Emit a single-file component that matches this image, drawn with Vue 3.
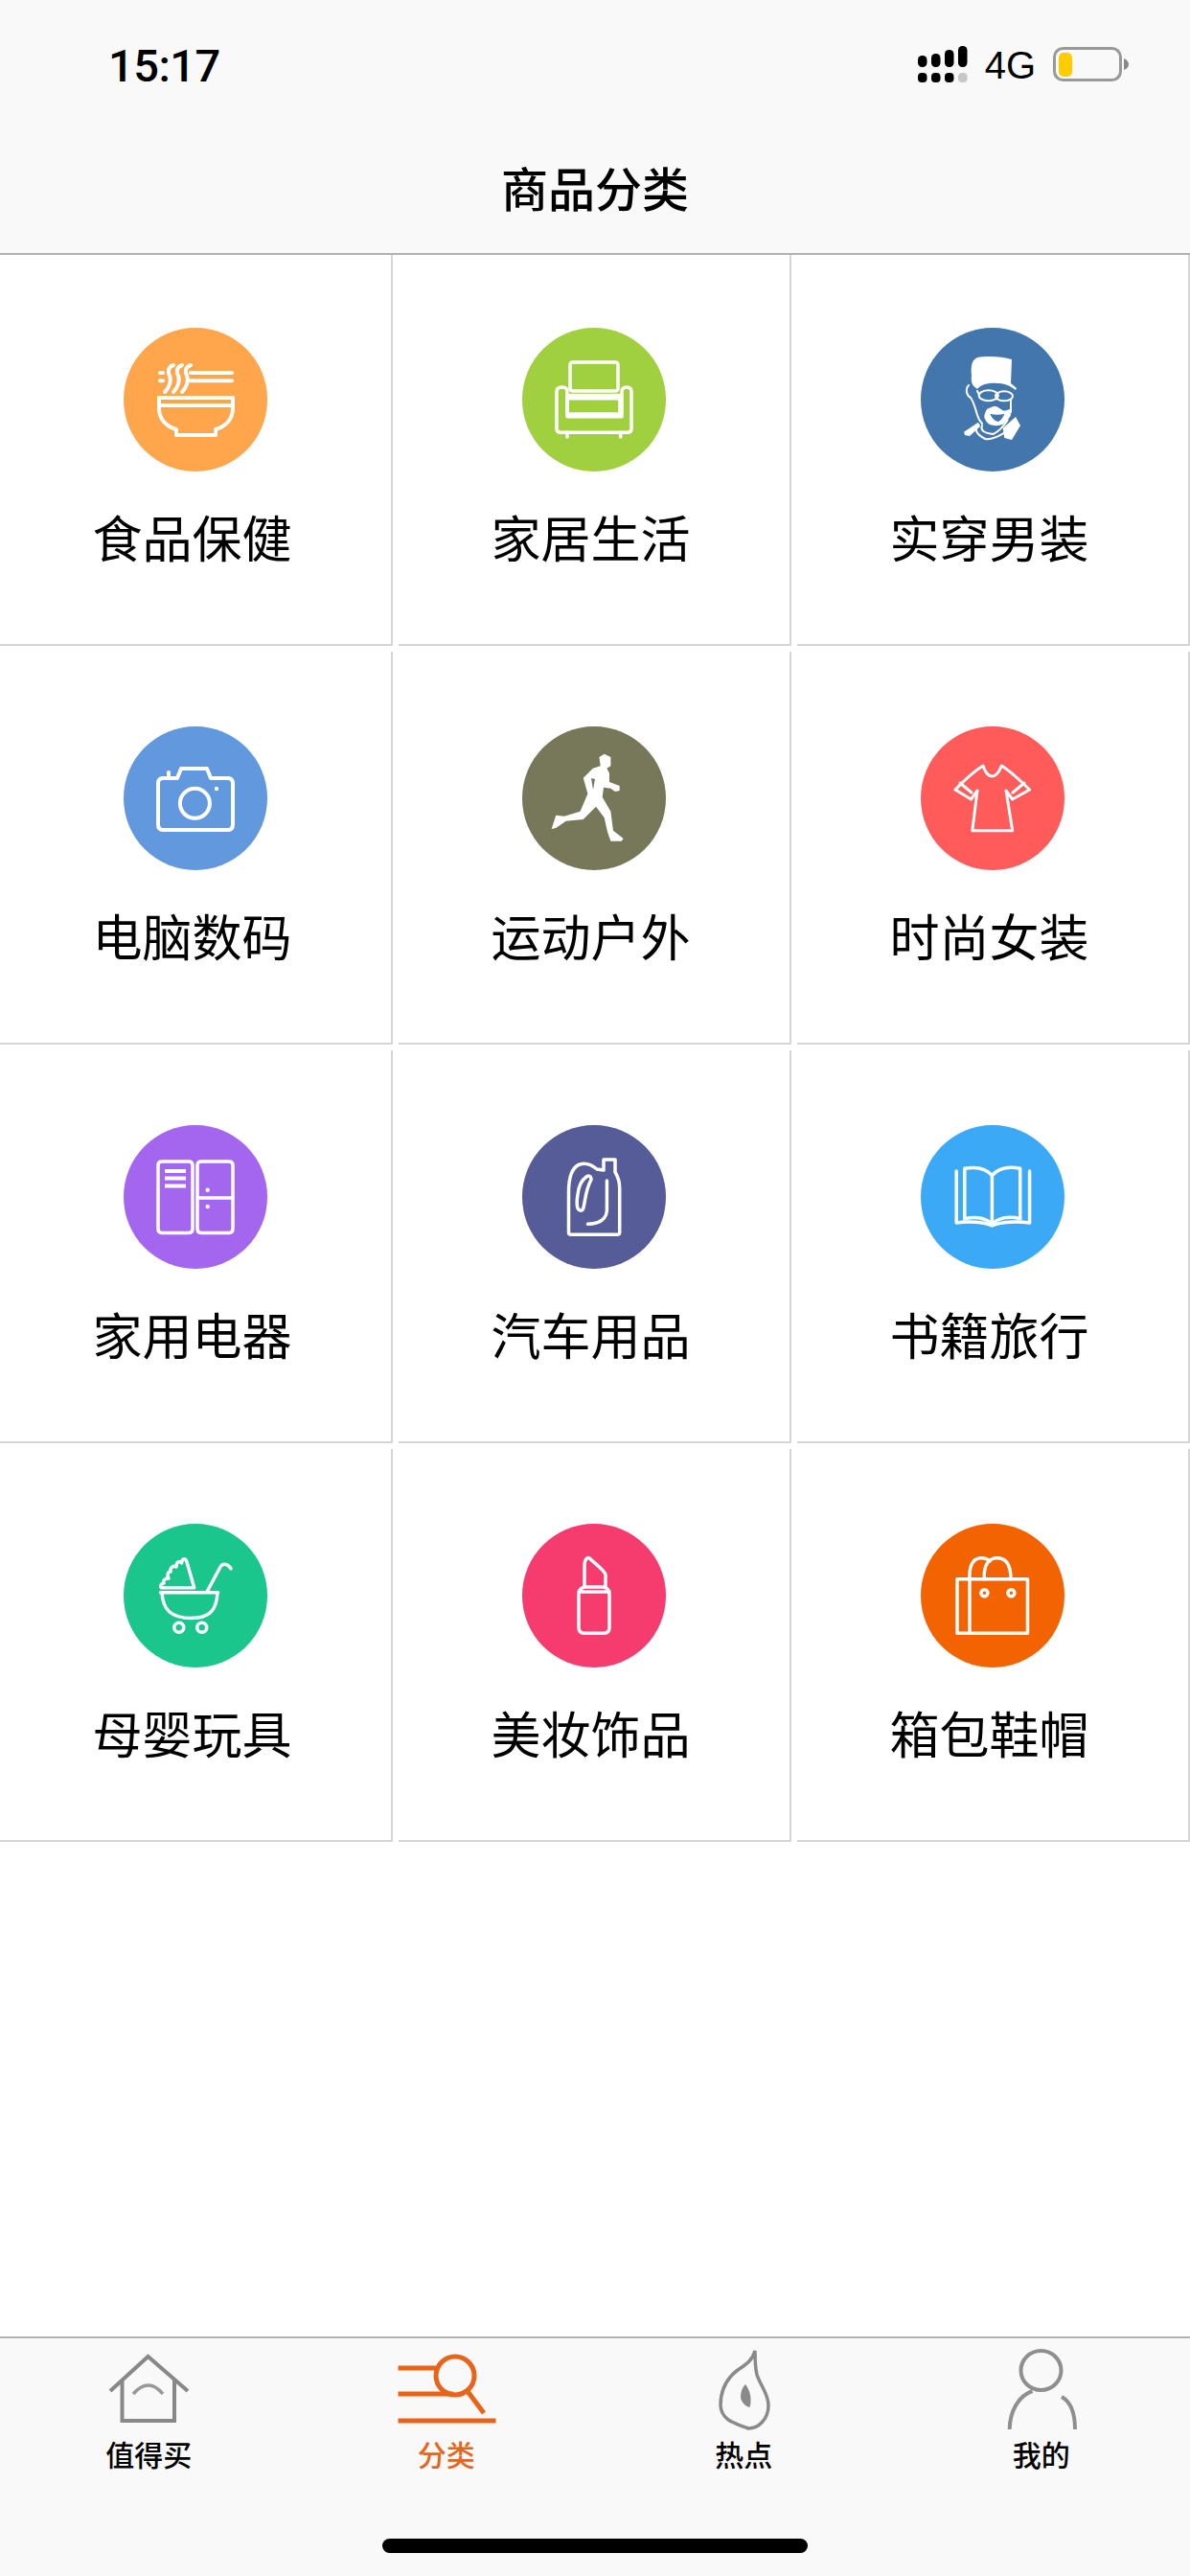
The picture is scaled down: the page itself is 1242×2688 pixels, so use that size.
<template>
  <div class="page">
    <header class="header">
      <div class="status">
        <span class="time">15:17</span>
        <div class="status-right">
          <svg class="signal" width="52" height="40" viewBox="0 0 52 40">
            <rect v-for="bar in signalBars" :key="bar.x" :x="bar.x" :y="bar.y" width="9.5" :height="22 - bar.y" rx="4.5" fill="#000" />
            <rect v-for="(x, i) in [0, 14, 28, 42]" :key="x" :x="x" y="28" width="9.5" height="10" rx="4" :fill="i === 3 ? '#c8c8c8' : '#000'" />
          </svg>
          <span class="network">4G</span>
          <svg class="battery" width="80" height="38" viewBox="0 0 80 38">
            <rect x="1.5" y="1.5" width="69" height="33" rx="9" fill="none" stroke="#999" stroke-width="3" />
            <rect x="6" y="6" width="14" height="25" rx="5" fill="#fc0" />
            <path d="M74 12 C77 13 79 16 79 18 C79 21 77 23 74 24 Z" fill="#888" />
          </svg>
        </div>
      </div>
      <h1 class="title">商品分类</h1>
    </header>

    <main class="grid">
      <div v-for="cat in categories" :key="cat.name" class="cell">
        <div class="badge" :style="{ background: cat.color }">
          <svg width="150" height="150" viewBox="0 0 150 150">
            <path
              v-for="(d, i) in cat.lines"
              :key="i"
              :d="d"
              fill="none"
              stroke="#fff"
              :stroke-width="cat.stroke || 3.5"
              stroke-linejoin="round"
              stroke-linecap="round"
            />
            <path v-for="(d, i) in cat.solids" :key="'s' + i" :d="d" fill="#fff" fill-rule="evenodd" />
          </svg>
        </div>
        <span class="cell-name">{{ cat.name }}</span>
      </div>
    </main>

    <footer class="tabbar">
      <nav class="tabs">
        <div class="tab">
          <svg width="120" height="86" viewBox="0 0 120 86" fill="none" stroke="#888" stroke-width="4">
            <path d="M20 45 L59.5 9 L101 45" />
            <path d="M32.5 33 V76 H87 V33" />
            <path d="M44 48 Q60 30 75 48" stroke-width="3.5" stroke="#999" />
          </svg>
          <span class="tab-name">值得买</span>
        </div>
        <div class="tab active">
          <svg width="120" height="86" viewBox="0 0 120 86" fill="none" stroke="#e8641b" stroke-width="5">
            <path d="M9.5 21 H49" />
            <path d="M9.5 48 H67" />
            <path d="M9.5 76 H111.5" />
            <circle cx="69" cy="29" r="20" />
            <path d="M82.5 46 L99 68" />
          </svg>
          <span class="tab-name">分类</span>
        </div>
        <div class="tab">
          <svg width="120" height="86" viewBox="0 0 120 86" fill="none" stroke="#8a8a8a" stroke-width="3.5">
            <path d="M72 3 C72 12 72 20 74 28 C78 40 86 48 86 60 C86 74 76 84 65 84 C52 79 37 76 36 60 C36 44 42 32 54 23 C61 18 69 14 72 3 Z" />
            <path d="M62 38 C58 42 57 47 57 52 C58 57 62 61 66.5 62 C69 54 67 44 62 38 Z" fill="#8a8a8a" stroke="none" />
          </svg>
          <span class="tab-name">热点</span>
        </div>
        <div class="tab">
          <svg width="120" height="86" viewBox="0 0 120 86" fill="none" stroke="#8f8f8f" stroke-width="4">
            <ellipse cx="59.5" cy="23.5" rx="21" ry="20.5" />
            <path d="M26.7 85 C27 66 36 50 50.5 45" />
            <path d="M81 51 C90 56 95 66 95 85" />
          </svg>
          <span class="tab-name">我的</span>
        </div>
      </nav>
      <div class="home-indicator"></div>
    </footer>
  </div>
</template>

<script setup>
const signalBars = [
  { x: 0, y: 10 },
  { x: 14, y: 8 },
  { x: 28, y: 4 },
  { x: 42, y: 0 }
]

// circle as a path, so every icon can be a plain list of strokes
function ring(cx, cy, rx, ry = rx) {
  return `M${cx - rx} ${cy} A${rx} ${ry} 0 1 0 ${cx + rx} ${cy} A${rx} ${ry} 0 1 0 ${cx - rx} ${cy} Z`
}

const categories = [
  {
    name: '食品保健',
    color: '#ffa64d',
    stroke: 4,
    lines: [
      'M70 47 H113', 'M70 55.3 H113',
      'M52 39 C46 41 46 46 48 50 C50 55 48 62 43 67',
      'M61 39 C55 41 55 46 57 50 C59 55 57 62 52 67',
      'M70 39 C64 41 64 46 66 50 C68 55 66 62 61 67',
      'M38 47 H41', 'M38 55.3 H41',
      'M37 73 H114 M37 81 H114',
      'M37 73 V84 C37 95 44 103 55 106 V112 H96 V106 C107 103 114 95 114 84 V73'
    ]
  },
  {
    name: '家居生活',
    color: '#a0cf3f',
    lines: [
      'M53 36 H97 Q100 36 100 39 V63 Q100 66 97 66 H53 Q50 66 50 63 V39 Q50 36 53 36 Z',
      'M47 73.7 H102 V90 H47 Z',
      'M47 70.5 H102',
      'M41 62 H42 Q47 62 47 67 V92.7 H104 V67 Q104 62 109 62 H109 Q114 62 114 67 V105 Q114 109.3 110 109.3 H40 Q36 109.3 36 105 V67 Q36 62 41 62 Z',
      'M47 109.3 V114', 'M102.7 109.3 V114'
    ]
  },
  {
    name: '实穿男装',
    color: '#4276ac',
    stroke: 2,
    lines: [
      'M50 60 C46 64 48 71 52 73 C55 77 57 84 59 91 C60 95 62 98 64 100',
      ring(70.7, 70.7, 10, 5.5),
      ring(87, 71.3, 9, 5),
      'M80.7 70.5 H78', 'M59 66 L61 70',
      'M94 75 V88',
      'M60.7 101.3 C55 106 58 111 67.3 116 C74 117 82 113 87.3 109.7',
      'M64 102 C62 107 66 110 75.7 111 C82 108 87 102 90.7 96.3'
    ],
    solids: [
      'M53 50 C52 40 53 34 59 31 C70 29 85 30 95 33 L94 58 L100 63 L99 65 C92 60 88 58 80 58 C70 57 62 60 59 64 C54 61 52 57 53 50 Z',
      'M69 85 C66 90 66 94 67 95 C68 98 70 100 72 101 C78 103 82 102 85.7 100.7 C90 97 93 94 94 91 L93.3 85 C90 86 88 87 85.7 86.3 C82 84 80 82 77.3 82 C74 82 72 84 69 85 Z M72.3 89.7 C77 91 83 91 87.3 89.7 C86 94 83 97 80.7 98 C77 97 74 94 72.3 89.7 Z',
      'M45 108.7 L60 98.7 L62 103 L51 113 L46 112 Z',
      'M85.7 104.7 L99 93 L104 102 L95 117 L87.3 115 Z'
    ]
  },
  {
    name: '电脑数码',
    color: '#6298dd',
    stroke: 4,
    lines: [
      'M40 54 H56 L60 44 H87 L91 54 H109 Q114 54 114 60 V102 Q114 108 109 108 H41 Q36 108 36 102 V60 Q36 54 41 54',
      ring(74.4, 80.3, 15.5),
      'M47 48 V53'
    ],
    solids: [ring(97, 65, 2.2)]
  },
  {
    name: '运动户外',
    color: '#77775a',
    solids: [
      'M85.7 28.7 L92.4 32 V41.3 L88.4 43.7 L91 48.7 V58 L101.7 62 V67 L97 68 L92.4 64.7 L85 63.7 L83.7 73.7 L92.4 88.7 L95 108.7 L105.6 117 L103.7 119.7 H92.4 L89 110 L85.7 95.3 L77 83.7 L63.8 97 L45.8 98.7 L35.2 106 L30.6 107 L35.2 92.7 L43.9 93.7 L60.5 88.7 L68.4 70.3 L63.8 53.7 L73.8 43.7 L81.7 41.3 L80.4 32 Z M72 54 L74 66 L76 55 Z'
    ]
  },
  {
    name: '时尚女装',
    color: '#ff5b5b',
    stroke: 3,
    lines: [
      'M65 41 C67 47 70 52 74.4 52 C79 52 82 47 84.4 41 C97 49 107 60 113.6 66 L95.7 76 L89 67 L95.7 108.7 H53.8 L59 67 L52.5 76 L36 66 C42 60 52 49 65 41 Z',
      'M41 59 L53 69', 'M108 59 L96 69'
    ]
  },
  {
    name: '家用电器',
    color: '#a566ef',
    lines: [
      'M40 38 H68 Q72 38 72 42 V108 Q72 112.5 68 112.5 H40 Q36 112.5 36 108 V42 Q36 38 40 38 Z',
      'M81 38 H110 Q114 38 114 42 V108 Q114 112.5 110 112.5 H81 Q77 112.5 77 108 V42 Q77 38 81 38 Z',
      'M77 76 H114'
    ],
    solids: [
      'M43 46 H65 V50 H43 Z', 'M43 53.5 H65 V57.5 H43 Z', 'M43 61.5 H65 V65.5 H43 Z',
      ring(87.7, 67.7, 2.2), ring(87.7, 85, 2.2)
    ]
  },
  {
    name: '汽车用品',
    color: '#565c97',
    lines: [
      'M48.5 112 V70 C48.5 55 52 44 60 41 C66 39 72 41 78 46 L85 47 V36 H97 V49 C100 54 101.7 58 101.7 66 V112 Q101.7 114.3 99 114.3 H51 Q48.5 114.3 48.5 112 Z',
      'M67 54 C61 58 59 64 58 72 C57 78 57 84 58 87 C60 90 63 90 64 86 C66 78 66 68 72 57 C72 53 69 52 67 54 Z',
      'M88.4 58 V89 C88 97 82 103 68.4 103.3'
    ]
  },
  {
    name: '书籍旅行',
    color: '#3ca9f6',
    lines: [
      'M37.2 48 V102 C50 100 66 101 74.4 105 C83 101 100 100 113.6 102 V48',
      'M45.8 97.7 V45.3 C58 43 68 45 74.4 52.7 C81 45 92 43 103.7 45.3 V97.7',
      'M45.8 97.7 C57 95 67 97 74.4 102.7 C82 97 93 95 103.7 97.7',
      'M74.4 52.7 V103'
    ]
  },
  {
    name: '母婴玩具',
    color: '#1bc68c',
    lines: [
      'M38.5 71.7 H98.5',
      'M40 72 C41 90 50 98.5 70.6 98.5 C90 98.5 97 90 98 72',
      'M39 66.7 H73.7 L66 40 C64.5 35 61 36 60.5 41 C58 38 55 40 55 45 C52 43 48 46 49 50 C46 50 45 54 47 57 C42 57 41 60 42 62 C39 62 38 65 39 66.7 Z',
      'M87 71 L101 45 C103 41 108 41 112 46.7',
      ring(57.8, 108.3, 5), ring(81.7, 108.3, 5)
    ]
  },
  {
    name: '美妆饰品',
    color: '#f63b6e',
    lines: [
      'M65 66 C61 67 59 70 59 74 V108 C59 112 61 114.3 65 114.3 H85 C89 114.3 91 112 91 108 V74 C91 70 89 67 85 66 Z',
      'M59 71 H91',
      'M65 65 V42 C65.5 37 68 34.5 70.4 36 C75 41 86 48 87 53.3 V65'
    ]
  },
  {
    name: '箱包鞋帽',
    color: '#f36301',
    lines: [
      'M38 57.7 H111.5 V114.3 H38 Z',
      'M51 57.7 V114.3',
      'M51 57.7 C50 42 56 35.7 62.7 35.7 C67 35.7 70 36.5 72 39',
      'M66.4 57.7 C65 42 72 35.7 79.7 35.7 C88 35.7 94 42 94 57.7',
      ring(66.4, 72.3, 3.5), ring(94.4, 72.3, 3.5)
    ]
  }
]
</script>

<style scoped>
.page {
  height: 2688px;
  display: flex;
  flex-direction: column;
  background: #fff;
  font-family: "Noto Sans CJK SC", "Liberation Sans", sans-serif;
  color: #000;
}

.header {
  height: 266px;
  box-sizing: border-box;
  background: #f9f9f9;
  border-bottom: 2px solid #b2b2b2;
}

.status {
  height: 136px;
  box-sizing: border-box;
  padding: 0 63px 0 113px;
  display: flex;
  justify-content: space-between;
  align-items: center;
}

.time {
  font-family: Roboto, "Liberation Sans", sans-serif;
  font-weight: 500;
  font-size: 47px;
  letter-spacing: -0.5px;
  line-height: 1;
}

.status-right {
  display: flex;
  align-items: center;
  gap: 18px;
}

.network {
  font-family: "Liberation Sans", sans-serif;
  font-size: 40px;
  line-height: 1;
}

.title {
  margin: 0;
  height: 128px;
  line-height: 118px;
  text-align: center;
  font-size: 49px;
  font-weight: 500;
}

.grid {
  display: grid;
  grid-template-columns: repeat(3, 410px);
  grid-template-rows: 408px repeat(3, 410px);
  gap: 6px;
}

.cell {
  box-sizing: border-box;
  display: flex;
  flex-direction: column;
  justify-content: flex-end;
  align-items: center;
  padding-bottom: 77px;
  border-right: 2px solid #d6d6d6;
  border-bottom: 2px solid #d6d6d6;
}

.badge {
  width: 150px;
  height: 150px;
  border-radius: 50%;
}

.badge svg {
  display: block;
}

.cell-name {
  margin-top: 33px;
  padding-right: 7px;
  font-size: 52px;
  line-height: 70px;
}

.tabbar {
  margin-top: auto;
  height: 250px;
  box-sizing: border-box;
  background: #f9f9f9;
  border-top: 2px solid #b2b2b2;
  padding-top: 10px;
}

.tabs {
  display: grid;
  grid-template-columns: repeat(4, 1fr);
}

.tab {
  display: flex;
  flex-direction: column;
  align-items: center;
}

.tab svg {
  display: block;
}

.tab-name {
  margin-top: 4px;
  font-size: 30px;
  font-weight: 500;
  line-height: 40px;
}

.tab.active .tab-name {
  color: #e8641b;
}

.home-indicator {
  width: 444px;
  height: 15px;
  margin: 69px auto 0;
  border-radius: 8px;
  background: #000;
}
</style>
